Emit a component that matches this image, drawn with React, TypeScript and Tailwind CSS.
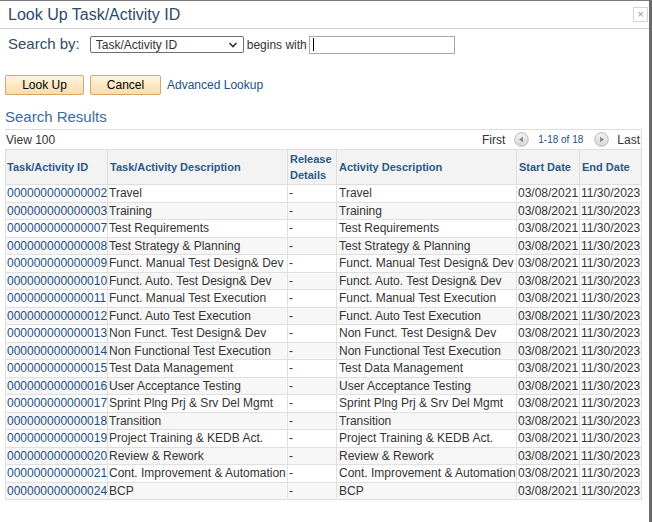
import React from "react";

const rows: [string, string][] = [
  ["000000000000002", "Travel"],
  ["000000000000003", "Training"],
  ["000000000000007", "Test Requirements"],
  ["000000000000008", "Test Strategy & Planning"],
  ["000000000000009", "Funct. Manual Test Design& Dev"],
  ["000000000000010", "Funct. Auto. Test Design& Dev"],
  ["000000000000011", "Funct. Manual Test Execution"],
  ["000000000000012", "Funct. Auto Test Execution"],
  ["000000000000013", "Non Funct. Test Design& Dev"],
  ["000000000000014", "Non Functional Test Execution"],
  ["000000000000015", "Test Data Management"],
  ["000000000000016", "User Acceptance Testing"],
  ["000000000000017", "Sprint Plng Prj & Srv Del Mgmt"],
  ["000000000000018", "Transition"],
  ["000000000000019", "Project Training & KEDB Act."],
  ["000000000000020", "Review & Rework"],
  ["000000000000021", "Cont. Improvement & Automation"],
  ["000000000000024", "BCP"],
];

const PagerIcon = ({ dir }: { dir: "left" | "right" }) => (
  <svg width="15" height="15" viewBox="0 0 15 15">
    <defs>
      <linearGradient id={`pg-${dir}`} x1="0" y1="0" x2="0" y2="1">
        <stop offset="0" stopColor="#f4f4f4" />
        <stop offset="1" stopColor="#d6d6d6" />
      </linearGradient>
    </defs>
    <circle cx="7.5" cy="7.5" r="6.8" fill={`url(#pg-${dir})`} stroke="#b8b8b8" />
    {dir === "left" ? (
      <path d="M5 7.5 L9 4.8 L9 10.2 Z" fill="#8a8a8a" />
    ) : (
      <path d="M10 7.5 L6 4.8 L6 10.2 Z" fill="#8a8a8a" />
    )}
  </svg>
);

export default function App() {
  return (
    <div
      className="w-[652px] h-[522px] bg-white border-t border-[#7a7a7a] border-r-[3px] border-r-[#6b6b6b] text-[#333] overflow-hidden"
      style={{ fontFamily: '"Liberation Sans", Arial, sans-serif' }}
    >
      {/* title bar */}
      <div className="h-[28px] flex items-center justify-between pl-[8px] pr-[1px] border-b border-[#cfcfcf]">
        <div className="text-[16px] text-[#2c4a6b]">Look Up Task/Activity ID</div>
        <div className="w-[15px] h-[15px] border border-[#d4d4d4] flex items-center justify-center text-[#8a9aa8] text-[11px] leading-none">
          ×
        </div>
      </div>

      {/* search row */}
      <div className="flex items-center h-[30px] pl-[8px] pt-[1px]">
        <span className="text-[15px] text-[#2c4a6b] mr-[10px]">Search by:</span>
        <div className="w-[154px] h-[17px] border border-[#6f6f6f] rounded-[2px] flex items-center justify-between px-[5px] text-[12px] text-[#333]">
          <span>Task/Activity ID</span>
          <svg width="10" height="8" viewBox="0 0 10 8">
            <path d="M1.5 2 L5 5.5 L8.5 2" fill="none" stroke="#333" strokeWidth="1.6" />
          </svg>
        </div>
        <span className="text-[12px] text-[#333] ml-[3px] mr-[2px]">begins with</span>
        <div className="w-[146px] h-[18px] border border-[#a9a9a9] flex items-center pl-[3px]">
          <div className="w-px h-[13px] bg-black" />
        </div>
      </div>

      {/* buttons */}
      <div className="flex items-center pl-[5px] mt-[16px] h-[20px]">
        <div className="w-[79px] h-[20px] border border-[#d6a766] rounded-[2px] bg-gradient-to-b from-[#fff4e0] to-[#fbdca8] flex items-center justify-center text-[12px] text-black">
          Look Up
        </div>
        <div className="w-[71px] h-[20px] ml-[6px] border border-[#d6a766] rounded-[2px] bg-gradient-to-b from-[#fff4e0] to-[#fbdca8] flex items-center justify-center text-[12px] text-black">
          Cancel
        </div>
        <span className="ml-[6px] text-[12px] text-[#1c4f85]">Advanced Lookup</span>
      </div>

      {/* results */}
      <div className="pl-[5px] mt-[13px] text-[15px] text-[#3a6ba3] leading-[18px]">Search Results</div>

      <div className="ml-[5px] w-[637px] mt-[3px] border-t border-r border-[#dcdcdc]">
        <div className="h-[19px] flex items-center justify-between text-[12px] text-[#333]">
          <span className="pl-px">View 100</span>
          <div className="flex items-center pr-[1px]">
            <span>First</span>
            <span className="ml-[9px] mr-[9px] flex"><PagerIcon dir="left" /></span>
            <span className="text-[10px] text-[#1c4f85]">1-18 of 18</span>
            <span className="ml-[11px] mr-[8px] flex"><PagerIcon dir="right" /></span>
            <span>Last</span>
          </div>
        </div>

        <table className="w-[636px] border-collapse text-[12px] table-fixed">
          <colgroup>
            <col className="w-[102px]" />
            <col className="w-[180px]" />
            <col className="w-[49px]" />
            <col className="w-[180px]" />
            <col className="w-[63px]" />
            <col className="w-[62px]" />
          </colgroup>
          <thead>
            <tr className="h-[35px] bg-[#f3f3f3] text-[11px] text-[#2a5a8a] font-bold text-left">
              <th className="border border-[#dedede] px-[1px] font-bold">Task/Activity ID</th>
              <th className="border border-[#dedede] px-[2px] font-bold">Task/Activity Description</th>
              <th className="border border-[#dedede] px-[2px] font-bold leading-[16px]">Release Details</th>
              <th className="border border-[#dedede] px-[2px] font-bold">Activity Description</th>
              <th className="border border-[#dedede] px-[2px] font-bold">Start Date</th>
              <th className="border border-[#dedede] px-[2px] font-bold">End Date</th>
            </tr>
          </thead>
          <tbody>
            {rows.map(([id, desc], i) => (
              <tr key={id} className={`h-[17.5px] leading-[14px] ${i % 2 === 1 ? "bg-[#f7f7f7]" : "bg-white"}`}>
                <td className="border border-[#e0e0e0] px-[1px] text-[#1c4f85] whitespace-nowrap overflow-hidden">{id}</td>
                <td className="border border-[#e0e0e0] px-[1px] whitespace-nowrap overflow-hidden">{desc}</td>
                <td className="border border-[#e0e0e0] px-[1px]">-</td>
                <td className="border border-[#e0e0e0] px-[2px] whitespace-nowrap overflow-hidden">{desc}</td>
                <td className="border border-[#e0e0e0] px-[1px] whitespace-nowrap overflow-hidden">03/08/2021</td>
                <td className="border border-[#e0e0e0] px-[1px] whitespace-nowrap overflow-hidden">11/30/2023</td>
              </tr>
            ))}
          </tbody>
        </table>
      </div>
    </div>
  );
}
